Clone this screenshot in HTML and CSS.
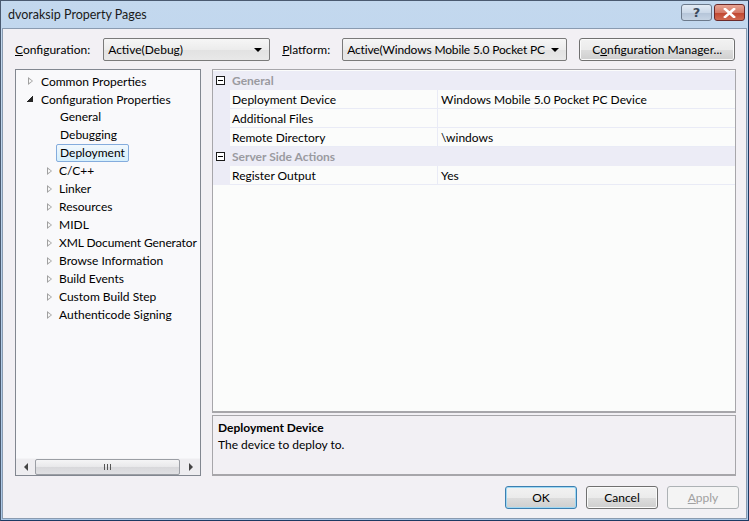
FILE: index.html
```html
<!DOCTYPE html>
<html>
<head>
<meta charset="utf-8">
<link rel="stylesheet" href="styles.css">
</head>
<body>
<div class="window">
  <div class="titlebar">
    <span class="title">dvoraksip Property Pages</span>
    <div class="caps">
      <div class="cap help">?</div>
      <div class="cap close">
        <svg width="13" height="10" viewBox="0 0 13 10"><path d="M2 1 L11 9 M11 1 L2 9" stroke="#fff" stroke-width="2.6" stroke-linecap="square"/></svg>
      </div>
    </div>
  </div>
  <div class="client">
    <div class="toolbar">
      <span class="lbl"><u>C</u>onfiguration:</span>
      <div class="combo c1"><span>Active(Debug)</span><i class="arrow"></i></div>
      <span class="lbl plat"><u>P</u>latform:</span>
      <div class="combo c2"><span>Active(Windows Mobile 5.0 Pocket PC</span><i class="arrow"></i></div>
      <div class="btn cfgmgr">C<u>o</u>nfiguration Manager...</div>
    </div>
    <div class="main">
      <div class="tree">
        <div class="tree-items">
          <div class="ti l0"><i class="tri"></i>Common Properties</div>
          <div class="ti l0"><i class="tri expanded"></i>Configuration Properties</div>
          <div class="ti l1 leaf"><span>General</span></div>
          <div class="ti l1 leaf"><span>Debugging</span></div>
          <div class="ti l1 leaf"><span class="sel">Deployment</span></div>
          <div class="ti l1"><i class="tri"></i><span>C/C++</span></div>
          <div class="ti l1"><i class="tri"></i><span>Linker</span></div>
          <div class="ti l1"><i class="tri"></i><span>Resources</span></div>
          <div class="ti l1"><i class="tri"></i><span>MIDL</span></div>
          <div class="ti l1"><i class="tri"></i><span class="tight">XML Document Generator</span></div>
          <div class="ti l1"><i class="tri"></i><span>Browse Information</span></div>
          <div class="ti l1"><i class="tri"></i><span>Build Events</span></div>
          <div class="ti l1"><i class="tri"></i><span>Custom Build Step</span></div>
          <div class="ti l1"><i class="tri"></i><span>Authenticode Signing</span></div>
        </div>
        <div class="hscroll">
          <div class="sarrow"><i class="la"></i></div>
          <div class="track"><div class="thumb"><span class="grip"></span></div></div>
          <div class="sarrow"><i class="ra"></i></div>
        </div>
      </div>
      <div class="right">
        <div class="grid">
          <div class="row cat"><span class="mbox"></span><span class="catname">General</span></div>
          <div class="row prop"><span class="margin"></span><span class="name">Deployment Device</span><span class="val">Windows Mobile 5.0 Pocket PC Device</span></div>
          <div class="row prop"><span class="margin"></span><span class="name">Additional Files</span><span class="val"></span></div>
          <div class="row prop"><span class="margin"></span><span class="name">Remote Directory</span><span class="val">\windows</span></div>
          <div class="row cat"><span class="mbox"></span><span class="catname">Server Side Actions</span></div>
          <div class="row prop"><span class="margin"></span><span class="name">Register Output</span><span class="val">Yes</span></div>
        </div>
        <div class="desc">
          <div class="dtitle">Deployment Device</div>
          <div class="dtext">The device to deploy to.</div>
        </div>
      </div>
    </div>
    <div class="footer">
      <div class="btn def">OK</div>
      <div class="btn">Cancel</div>
      <div class="btn dis"><u>A</u>pply</div>
    </div>
  </div>
</div>
</body>
</html>
```

FILE: styles.css
```css
* { box-sizing: border-box; }
html, body { margin: 0; padding: 0; }
body {
  width: 749px; height: 521px; overflow: hidden;
  font-family: Lato, "Noto Sans", sans-serif;
  font-size: 12px; color: #000;
}
.window {
  width: 749px; height: 521px;
  display: flex; flex-direction: column;
  border: 1px solid #4a5a70;
  border-right-color: #1d3a63;
  border-bottom-color: #1d3a63;
  background: linear-gradient(#c3d8ee, #abc7e6);
}
.titlebar {
  height: 27px; flex: none;
  display: flex; align-items: flex-start; justify-content: space-between;
  padding-left: 7px;
}
.title { margin-top: 6px; font-size: 12.5px; color: #1a1a1a; }
.caps { display: flex; gap: 2px; margin-top: 3px; margin-right: 3px; }
.cap {
  height: 17px; border: 1px solid #6c7a8c; border-radius: 3px;
  display: flex; align-items: center; justify-content: center;
}
.help {
  width: 31px;
  background: linear-gradient(#e4ecf5 0%, #cbd8e8 50%, #b4c4d8 51%, #c6d4e4 100%);
  color: #3c4a5c; font-weight: bold; font-size: 13px; font-family: "DejaVu Sans", sans-serif;
}
.close {
  width: 31px;
  border-color: #6b2a2a;
  background: linear-gradient(#e8a493 0%, #d47a68 50%, #c0452f 51%, #d06a52 100%);
}
.client {
  flex: 1;
  margin: 0 1px 1px 1px;
  border: 1px solid #8a9bb0;
  background: #f2f0f4;
  display: flex; flex-direction: column;
  padding: 9px 10px 0 12px;
}
.toolbar { display: flex; align-items: center; height: 23px; }
.lbl { color: #000; white-space: nowrap; }
.lbl u, .btn u { text-decoration: underline; }
.combo {
  height: 23px; flex: none;
  border: 1px solid #7a7a7a; border-radius: 2px;
  background: linear-gradient(#f6f6f6, #ececec 50%, #e2e2e2 51%, #e8e8e8);
  display: flex; align-items: center;
  padding: 0 7px 0 4px;
}
.c1 { width: 167px; margin-left: 13px; }
.c2 { width: 225px; margin-left: 12px; }
.plat { margin-left: 12px; }
.combo span { flex: 1; min-width: 0; white-space: nowrap; overflow: hidden; margin-right: 5px; }
.c2 span { letter-spacing: -0.15px; }
.arrow {
  width: 0; height: 0; flex: none;
  border-left: 4px solid transparent; border-right: 4px solid transparent;
  border-top: 4px solid #000;
}
.btn {
  height: 23px; flex: none;
  border: 1px solid #707070; border-radius: 3px;
  background: linear-gradient(#f2f2f2 0%, #ebebeb 50%, #dddddd 51%, #cfcfcf 100%);
  display: flex; align-items: center; justify-content: center;
  box-shadow: inset 0 0 0 1px #fafafa;
}
.cfgmgr { width: 156px; margin-left: 12px; }
.main { display: flex; gap: 11px; margin-top: 8px; height: 407px; }
.tree {
  width: 186px; flex: none;
  border: 1px solid #828790;
  background: #f9f9fb;
  display: flex; flex-direction: column;
}
.tree-items { flex: 1; padding-top: 2px; overflow: hidden; }
.ti {
  height: 18px; display: flex; align-items: center; white-space: nowrap;
}
.ti.l0 { padding-left: 12px; }
.ti.l1 { padding-left: 31px; }
.ti.leaf { padding-left: 40px; }
.ti span { padding: 0 3px; line-height: 16px; border: 1px solid transparent; border-radius: 2px; }
.ti span.tight { letter-spacing: -0.1px; }
.ti.l0 .tri { margin-right: 8px; }
.ti.l1 .tri { margin-right: 3px; }
.tri {
  width: 0; height: 0; flex: none;
  border-top: 4px solid transparent; border-bottom: 4px solid transparent;
  border-left: 5px solid #a0a0a0;
  position: relative;
}
.tri::after {
  content: ""; position: absolute; left: -4px; top: -2.5px;
  border-top: 2.5px solid transparent; border-bottom: 2.5px solid transparent;
  border-left: 3px solid #fbfbfb;
}
.ti.l0 .tri.expanded {
  border: none; width: 6px; height: 6px;
  margin-right: 8px; margin-left: -1px;
  background: linear-gradient(to bottom right, transparent 50%, #262626 50%);
}
.tri.expanded::after { display: none; }
.sel {
  background: linear-gradient(#f1f8fd, #d5effc);
  border-color: #84acdd !important;
}
.hscroll {
  height: 17px; flex: none; display: flex;
  background: #eeedf0; border-top: 1px solid #f4f4f6;
}
.sarrow { width: 19px; display: flex; align-items: center; justify-content: center; }
.la { width: 0; height: 0; border-top: 4px solid transparent; border-bottom: 4px solid transparent; border-right: 4px solid #444; }
.ra { width: 0; height: 0; border-top: 4px solid transparent; border-bottom: 4px solid transparent; border-left: 4px solid #444; }
.track { flex: 1; display: flex; }
.thumb {
  width: 145px; height: 16px;
  border: 1px solid #9b9ea4; border-radius: 2px;
  background: linear-gradient(#f5f5f6, #e8e8ea 50%, #d8d8db 51%, #e0e0e3);
  display: flex; align-items: center; justify-content: center;
}
.grip {
  width: 7px; height: 6px;
  background: repeating-linear-gradient(to right, #555 0 1px, transparent 1px 3px);
}
.right { flex: 1; display: flex; flex-direction: column; }
.grid {
  flex: 1;
  border: 1px solid #a7a6aa;
  border-bottom: 2px solid #a7a6aa;
  background: #fbfcfb;
  padding-top: 1px;
}
.row { height: 19px; display: flex; align-items: stretch; }
.cat { background: #ececf6; align-items: center; }
.mbox {
  width: 9px; height: 9px; margin-left: 3px; margin-right: 7px;
  border: 1px solid #1a1a1a; position: relative; background: #fff;
}
.mbox::after {
  content: ""; position: absolute; left: 1px; top: 3px; width: 5px; height: 1px; background: #000;
}
.catname { font-weight: bold; color: #9a9aa0; }
.margin { width: 17px; flex: none; background: #ececf6; }
.name {
  width: 208px; flex: none; padding-left: 2px;
  border-bottom: 1px solid #e9ebf6; border-right: 1px solid #e9ebf6;
  display: flex; align-items: center;
}
.val {
  flex: 1; padding-left: 3px;
  border-bottom: 1px solid #e9ebf6;
  display: flex; align-items: center;
}
.desc {
  height: 61px; flex: none; margin-top: 2px;
  border: 1px solid #a7a6aa; border-bottom: 2px solid #a7a6aa;
  padding: 3px 5px;
}
.dtitle { font-weight: bold; line-height: 17px; }
.dtext { line-height: 18px; }
.footer {
  display: flex; justify-content: flex-end; gap: 9px;
  margin-top: 10px; margin-right: -3px;
}
.footer .btn { width: 72px; }
.btn.def {
  border-color: #3c7fb1;
  box-shadow: inset 0 0 0 1px #9fd8f3;
}
.btn.dis {
  border-color: #adb2b5; background: #f4f4f4; color: #a0a0a0; box-shadow: none;
}
```
